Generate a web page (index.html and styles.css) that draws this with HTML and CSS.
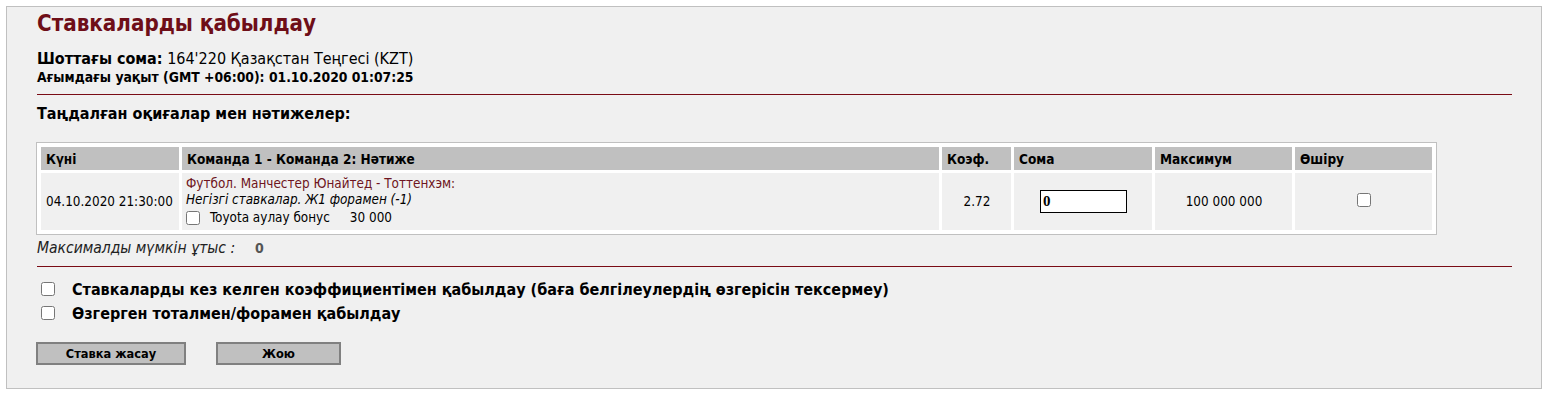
FILE: index.html
```
<!DOCTYPE html>
<html lang="kk">
<head>
<meta charset="utf-8">
<title>Ставкаларды қабылдау</title>
<link rel="stylesheet" href="styles.css">
</head>
<body>
<div class="panel">
  <h1 class="title">Ставкаларды қабылдау</h1>
  <div class="balance"><b>Шоттағы сома:</b> 164'220 Қазақстан Теңгесі (KZT)</div>
  <div class="time">Ағымдағы уақыт (GMT +06:00): 01.10.2020 01:07:25</div>
  <div class="rule rule-top"></div>
  <h2 class="section">Таңдалған оқиғалар мен нәтижелер:</h2>
  <table class="bets">
    <colgroup>
      <col class="c-date"><col class="c-event"><col class="c-coef"><col class="c-sum"><col class="c-max"><col class="c-del">
    </colgroup>
    <thead>
      <tr>
        <th>Күні</th>
        <th>Команда 1 - Команда 2: Нәтиже</th>
        <th>Коэф.</th>
        <th>Сома</th>
        <th>Максимум</th>
        <th>Өшіру</th>
      </tr>
    </thead>
    <tbody>
      <tr>
        <td>04.10.2020 21:30:00</td>
        <td class="event">
          <div class="event-name">Футбол. Манчестер Юнайтед - Тоттенхэм:</div>
          <div class="event-market">Негізгі ставкалар. Ж1 форамен (-1)</div>
          <label class="bonus"><input type="checkbox" class="cb bonus-cb"><span>Toyota аулау бонус</span><span class="bonus-sum">30 000</span></label>
        </td>
        <td class="center">2.72</td>
        <td class="center"><input type="text" class="stake" value="0"></td>
        <td class="center">100 000 000</td>
        <td class="center"><input type="checkbox" class="cb"></td>
      </tr>
    </tbody>
  </table>
  <div class="maxwin"><span class="maxwin-label">Максималды мүмкін ұтыс :</span><span class="maxwin-val">0</span></div>
  <div class="rule rule-bottom"></div>
  <label class="opt"><input type="checkbox" class="cb opt-cb"><span>Ставкаларды кез келген коэффициентімен қабылдау (баға белгілеулердің өзгерісін тексермеу)</span></label>
  <label class="opt"><input type="checkbox" class="cb opt-cb"><span>Өзгерген тоталмен/форамен қабылдау</span></label>
  <div class="actions">
    <button class="btn btn-bet">Ставка жасау</button>
    <button class="btn btn-clear">Жою</button>
  </div>
</div>
</body>
</html>
```
FILE: styles.css
```
html, body {
  margin: 0;
  padding: 0;
  background: #ffffff;
}
body {
  padding: 6px 10px 0 6px;
  font-family: "DejaVu Sans Condensed", "DejaVu Sans", sans-serif;
  font-size: 13.4px;
  color: #000;
}
.panel {
  box-sizing: border-box;
  width: 1536px;
  height: 383px;
  border: 1px solid #c0c0c0;
  background: #f0f0f0;
  padding: 0 29px 0 30px;
}
.title {
  margin: 2px 0 0 0;
  font-size: 22.2px;
  line-height: 28px;
  font-weight: bold;
  color: #6e0e18;
}
.balance {
  margin-top: 12px;
  font-size: 16px;
  line-height: 20px;
}
.time {
  font-size: 13.8px;
  line-height: 16px;
  font-weight: bold;
}
.rule {
  height: 1px;
  background: #7a0b15;
}
.rule-top {
  margin-top: 9px;
}
.section {
  margin: 10px 0 0 0;
  font-size: 16px;
  line-height: 18px;
  font-weight: bold;
}
.bets {
  margin: 19px 0 0 -1px;
  width: 1401px;
  table-layout: fixed;
  border: 1px solid #c0c0c0;
  background: #ffffff;
  padding: 1px;
  border-spacing: 3px;
}
.c-date { width: 138px; }
.c-event { width: 757px; }
.c-coef { width: 69px; }
.c-sum { width: 138px; }
.c-max { width: 137px; }
.c-del { width: 137px; }
.bets th {
  background: #c0c0c0;
  height: 23px;
  padding: 0 5px;
  text-align: left;
  font-weight: bold;
  font-size: 13.5px;
  line-height: 16px;
}
.bets td {
  background: #f0f0f0;
  height: 57px;
  padding: 0 4px 0 5px;
  font-size: 13.4px;
  line-height: 16px;
  vertical-align: middle;
}
.bets td.event {
  padding-left: 4px;
}
.center {
  text-align: center;
}
.event-name {
  color: #6e1520;
}
.event-market {
  font-style: italic;
}
.bonus {
  display: flex;
  align-items: center;
  height: 19px;
}
.cb {
  width: 14px;
  height: 14px;
  margin: 0;
}
.bonus-cb {
  margin: 0 10px 0 0;
}
.bonus-sum {
  margin-left: 20px;
}
.stake {
  box-sizing: border-box;
  width: 87px;
  height: 23px;
  border: 1px solid #000;
  padding: 0 2px;
  font-family: "Liberation Serif", serif;
  font-weight: bold;
  font-size: 15px;
  background: #fff;
  outline: none;
}
.maxwin {
  display: flex;
  align-items: baseline;
  height: 20px;
  line-height: 20px;
  margin-top: 3px;
}
.maxwin-label {
  font-style: italic;
  font-size: 15.5px;
  color: #222;
}
.maxwin-val {
  margin-left: 20px;
  font-weight: bold;
  font-size: 14px;
  color: #555;
}
.rule-bottom {
  margin-top: 8px;
}
.opt {
  display: flex;
  align-items: center;
  height: 24px;
  font-size: 16px;
  font-weight: bold;
}
.opt:first-of-type {
  margin-top: 10px;
}
.opt-cb {
  margin: 0 17px 0 4px;
}
.actions {
  display: flex;
  gap: 30px;
  margin-top: 17px;
  margin-left: -1px;
}
.btn {
  box-sizing: border-box;
  height: 23px;
  border: 2px solid #808080;
  background: #c0c0c0;
  font-family: "DejaVu Sans Condensed", "DejaVu Sans", sans-serif;
  font-weight: bold;
  font-size: 12.7px;
  color: #000;
  padding: 0;
}
.btn-bet { width: 150px; }
.btn-clear { width: 125px; }
```
